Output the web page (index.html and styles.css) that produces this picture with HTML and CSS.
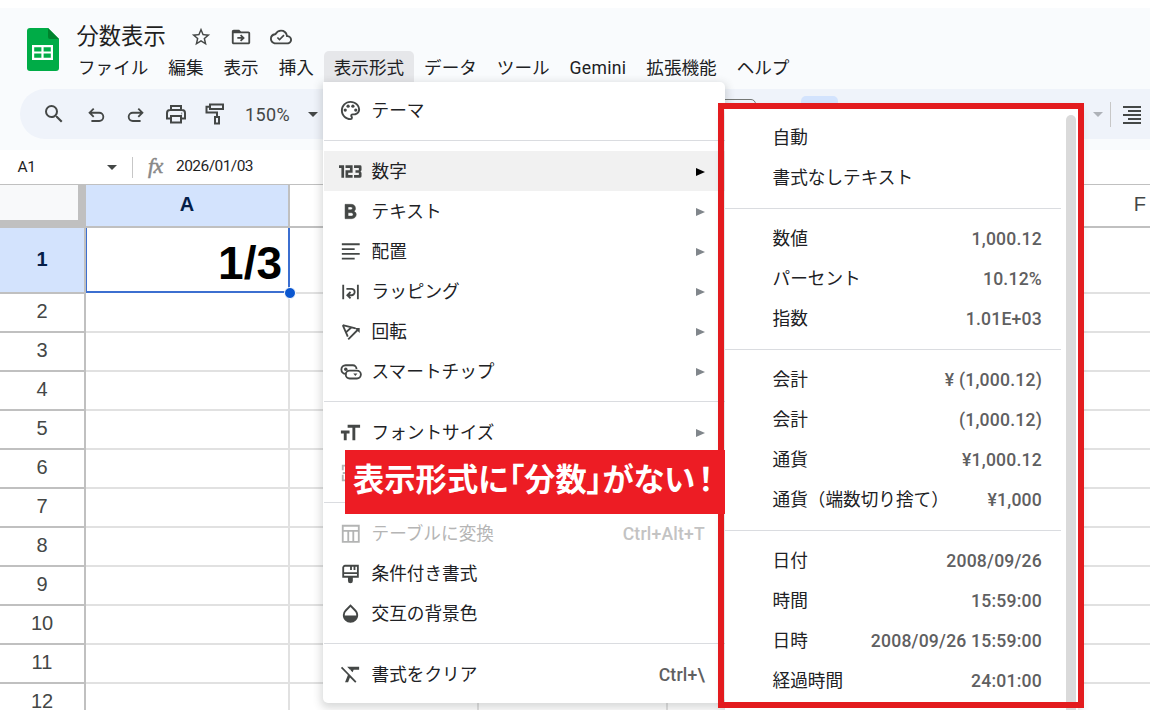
FILE: index.html
```html
<!DOCTYPE html>
<html lang="ja">
<head>
<meta charset="utf-8">
<title>分数表示</title>
<link rel="stylesheet" href="styles.css">
</head>
<body>
<div class="app">
  <header class="header">
    <svg class="logo" viewBox="0 0 32 43"><path d="M3 0H21L32 11V40a3 3 0 0 1-3 3H3a3 3 0 0 1-3-3V3a3 3 0 0 1 3-3Z" fill="#00ac47"/><path d="M21 0L32 11H23a2 2 0 0 1-2-2Z" fill="#00832d"/><path d="M5 17H26V32H5ZM7.2 19.2V23.400H14.400V19.200ZM16.600 19.200V23.400H23.800V19.200ZM7.200 25.600V29.800H14.400V25.600ZM16.600 25.600V29.800H23.800V25.600Z" fill="#fff" fill-rule="evenodd"/></svg>
    <div class="heading">
      <div class="title-row">
        <h1 class="title">分数表示</h1>
        <svg class="ic star" viewBox="0 0 24 24"><path d="M22 9.240l-7.190-.620L12 2 9.190 8.630 2 9.240l5.460 4.730L5.820 21 12 17.270 18.180 21l-1.630-7.030L22 9.240zM12 15.400l-3.760 2.270 1-4.280-3.320-2.880 4.380-.380L12 6.100l1.710 4.040 4.380.380-3.320 2.880 1 4.280L12 15.400z"/></svg>
        <svg class="ic folder" viewBox="0 0 24 24"><path d="M20 6h-8l-2-2H4c-1.100 0-2 .9-2 2v12c0 1.100.9 2 2 2h16c1.100 0 2-.9 2-2V8c0-1.100-.9-2-2-2zm0 12H4V8h16v10z"/><path d="M3 5H10L12 7.500H3Z"/><path d="M12.200 9.200l4 3.800-4 3.800-1.300-1.300 1.500-1.600H8v-1.800h4.400l-1.500-1.600z"/></svg>
        <svg class="ic cloud" viewBox="0 0 24 24"><path d="M19.350 10.040A7.490 7.490 0 0 0 12 4C9.110 4 6.600 5.640 5.350 8.040A5.994 5.994 0 0 0 0 14c0 3.310 2.690 6 6 6h13c2.760 0 5-2.240 5-5 0-2.640-2.050-4.780-4.650-4.960zM19 18H6c-2.210 0-4-1.790-4-4 0-2.050 1.530-3.760 3.560-3.970l1.070-.110.500-.950A5.469 5.469 0 0 1 12 6c2.620 0 4.880 1.860 5.390 4.430l.3 1.500 1.530.110A2.980 2.980 0 0 1 22 15c0 1.650-1.350 3-3 3z"/><path d="M10.400 16.200l-3-3 1.300-1.300 1.700 1.700 4.200-4.200 1.300 1.300z"/></svg>
      </div>
      <nav class="menubar"><span>ファイル</span><span>編集</span><span>表示</span><span>挿入</span><span class="open">表示形式</span><span>データ</span><span>ツール</span><span class="latin">Gemini</span><span>拡張機能</span><span>ヘルプ</span></nav>
    </div>
  </header>

  <div class="toolbar">
    <span class="tool t-search"><svg class="ic" viewBox="0 0 24 24"><path d="M15.500 14h-.790l-.280-.270A6.471 6.471 0 0 0 16 9.500 6.500 6.500 0 1 0 9.500 16c1.610 0 3.090-.590 4.230-1.570l.270.280v.790l5 4.990L20.490 19l-4.990-5zm-6 0a4.500 4.500 0 1 1 0-9 4.500 4.500 0 0 1 0 9z"/></svg></span>
    <span class="tool t-undo"><svg class="ic line" viewBox="0 0 24 24"><path d="M9.500 5L5 9.500L9.500 14M5 9.500H15.500a4 4 0 0 1 0 9H7"/></svg></span>
    <span class="tool t-redo"><svg class="ic line" viewBox="0 0 24 24"><path d="M14.500 5L19 9.500L14.500 14M19 9.500H8.500a4 4 0 0 0 0 9H17"/></svg></span>
    <span class="tool t-print"><svg class="ic line" viewBox="0 0 24 24"><path d="M7 8V4H17V8M7 16.500H3V11a3 3 0 0 1 3-3H18a3 3 0 0 1 3 3V16.500H17M7 14H17V20.500H7Z"/><path d="M17.500 11.500h.6" /></svg></span>
    <span class="tool t-paint"><svg class="ic line" viewBox="0 0 24 24"><path d="M7 2.500H20V7H7ZM7 4.800H3.500V10.500H14V15M12 15H16V21.500H12Z"/></svg></span>
    <span class="zoom-value">150%</span><i class="caret"></i>
    <span class="font-size"></span>
    <span class="bold-active"></span>
    <i class="caret caret-dim"></i>
    <span class="divider"></span>
    <svg class="align-right" viewBox="0 0 18 18"><path d="M0 1H18M5 5H18M0 9H18M5 13H18M0 17H18"/></svg>
    <i class="caret caret-dim caret-edge"></i>
  </div>

  <div class="formula-bar">
    <span class="cell-name">A1</span><i class="caret"></i><span class="divider"></span><em class="fx">fx</em><span class="formula">2026/01/03</span>
  </div>

  <div class="sheet">
    <div class="row head"><div class="corner"></div><div class="cell a">A</div><div class="cell"></div><div class="cell"></div><div class="cell"></div><div class="cell"></div><div class="cell">F</div></div>
    <div class="row first"><div class="num">1</div><div class="cell a">1/3<i class="handle"></i></div><div class="cell"></div><div class="cell"></div><div class="cell"></div><div class="cell"></div><div class="cell"></div></div>
    <div class="row"><div class="num">2</div><div class="cell a"></div><div class="cell"></div><div class="cell"></div><div class="cell"></div><div class="cell"></div><div class="cell"></div></div>
    <div class="row"><div class="num">3</div><div class="cell a"></div><div class="cell"></div><div class="cell"></div><div class="cell"></div><div class="cell"></div><div class="cell"></div></div>
    <div class="row"><div class="num">4</div><div class="cell a"></div><div class="cell"></div><div class="cell"></div><div class="cell"></div><div class="cell"></div><div class="cell"></div></div>
    <div class="row"><div class="num">5</div><div class="cell a"></div><div class="cell"></div><div class="cell"></div><div class="cell"></div><div class="cell"></div><div class="cell"></div></div>
    <div class="row"><div class="num">6</div><div class="cell a"></div><div class="cell"></div><div class="cell"></div><div class="cell"></div><div class="cell"></div><div class="cell"></div></div>
    <div class="row"><div class="num">7</div><div class="cell a"></div><div class="cell"></div><div class="cell"></div><div class="cell"></div><div class="cell"></div><div class="cell"></div></div>
    <div class="row"><div class="num">8</div><div class="cell a"></div><div class="cell"></div><div class="cell"></div><div class="cell"></div><div class="cell"></div><div class="cell"></div></div>
    <div class="row"><div class="num">9</div><div class="cell a"></div><div class="cell"></div><div class="cell"></div><div class="cell"></div><div class="cell"></div><div class="cell"></div></div>
    <div class="row"><div class="num">10</div><div class="cell a"></div><div class="cell"></div><div class="cell"></div><div class="cell"></div><div class="cell"></div><div class="cell"></div></div>
    <div class="row"><div class="num">11</div><div class="cell a"></div><div class="cell"></div><div class="cell"></div><div class="cell"></div><div class="cell"></div><div class="cell"></div></div>
    <div class="row"><div class="num">12</div><div class="cell a"></div><div class="cell"></div><div class="cell"></div><div class="cell"></div><div class="cell"></div><div class="cell"></div></div>
  </div>

  <div class="menu">
    <div class="item"><svg class="ic" viewBox="0 0 24 24"><path d="M12 22C6.490 22 2 17.510 2 12S6.490 2 12 2s10 4.040 10 9c0 3.310-2.690 6-6 6h-1.770c-.280 0-.5.220-.5.500 0 .120.050.230.130.330.410.470.640 1.060.640 1.670A2.500 2.500 0 0 1 12 22zm0-18c-4.410 0-8 3.590-8 8s3.590 8 8 8c.280 0 .5-.220.5-.5a.54.54 0 0 0-.140-.350c-.410-.460-.630-1.050-.630-1.650a2.500 2.500 0 0 1 2.500-2.500H16c2.210 0 4-1.790 4-4 0-3.860-3.590-7-8-7z"/><circle cx="6.500" cy="11.500" r="1.700"/><circle cx="9.500" cy="7.500" r="1.700"/><circle cx="14.500" cy="7.500" r="1.700"/><circle cx="17.500" cy="11.500" r="1.700"/></svg><span>テーマ</span></div>
    <hr>
    <div class="item hover"><svg class="ic" viewBox="0 0 24 24"><path d="M0 5.500H5.300V18.500H2.500V8.300H0ZM6.800 5.500H14.200V13.200H9.600V15.700H14.200V18.500H6.800V10.700H11.400V8.300H6.800ZM15.700 5.500H22a1.500 1.500 0 0 1 1.500 1.500V10.800L22.500 12l1 1.200V17a1.500 1.500 0 0 1-1.500 1.500H15.700V15.700H20.700V13.300H17.200V10.700H20.700V8.300H15.700Z"/></svg><span>数字</span><b class="arrow"></b></div>
    <div class="item"><svg class="ic" viewBox="0 0 24 24"><path d="M15.600 11.790c.970-.670 1.650-1.770 1.650-2.790 0-2.760-1.750-4.500-4.500-4.500H6.300v15h7.040c2.500 0 4.660-1.900 4.660-4.250 0-1.520-.860-2.820-2.400-3.460zM9.500 7.200h3a1.500 1.500 0 0 1 0 3h-3v-3zm3.500 9.600H9.500v-3.500H13a1.750 1.750 0 0 1 0 3.500z" stroke="#444746" stroke-width=".5"/></svg><span>テキスト</span><b class="arrow"></b></div>
    <div class="item"><svg class="ic line" viewBox="0 0 24 24"><path d="M2 3.500H21.500M2 8.800H16M2 14H21.500M2 19.300H16"/></svg><span>配置</span><b class="arrow"></b></div>
    <div class="item"><svg class="ic line" viewBox="0 0 24 24"><path d="M3.500 4V20M19.500 4V20M7 8.500H12.500a3.500 3.500 0 0 1 0 7H8.500M11.500 12L8 15.500L11.500 19"/></svg><span>ラッピング</span><b class="arrow"></b></div>
    <div class="item"><svg class="ic line" viewBox="0 0 24 24"><path d="M3 4.500L17 8M3 4.500L8.500 17M12.500 6.800L6.500 12.500M9 20L20 9"/><path d="M21.500 7.500V13L16 7.500Z" fill="#444746" stroke="none"/></svg><span>回転</span><b class="arrow"></b></div>
    <div class="item"><svg class="ic line chip" viewBox="0 0 24 24"><path d="M7.500 14H6.200a4.700 4.700 0 0 1 0-9.400H14a4 4 0 0 1 4 4M10.500 10.500H18.500a4.300 4.300 0 0 1 0 8.600H10.500a4.300 4.300 0 0 1 0-8.600Z"/><circle cx="6.300" cy="9" r="1.900" fill="#444746" stroke="none"/><path d="M14.500 13.500h4.500l-2.250 2.800z" fill="#444746" stroke="none"/></svg><span>スマートチップ</span><b class="arrow"></b></div>
    <hr>
    <div class="item"><svg class="ic" viewBox="0 0 24 24"><path d="M9 4V7H14V20H17V7H22V4ZM2 10V13H5V20H8V13H11V10Z"/></svg><span>フォントサイズ</span><b class="arrow"></b></div>
    <div class="item disabled"><svg class="ic line" viewBox="0 0 24 24"><path d="M3 9V4H8M12 4H21V9M3 14V20H8M21 14V20H12M3 12H8"/></svg></div>
    <hr>
    <div class="item disabled"><svg class="ic line" viewBox="0 0 24 24"><path d="M3 3H20.500V20.500H3ZM3 8.500H20.500M9 8.500V20.500M14.500 8.500V20.500"/></svg><span>テーブルに変換</span><kbd>Ctrl+Alt+T</kbd></div>
    <div class="item"><svg class="ic line" viewBox="0 0 24 24"><path d="M5.500 3H19.500V15H3.500V5a2 2 0 0 1 2-2ZM3.500 11H19.500M12 3V7.500M15.800 3V7.500"/><path d="M8.700 15H14V19.500a2.600 2.600 0 0 1-5.300 0Z" fill="#444746" stroke="none"/></svg><span>条件付き書式</span></div>
    <div class="item"><svg class="ic" viewBox="0 0 24 24"><path d="M17.660 8L12 2.350 6.340 8A8.020 8.020 0 0 0 4 13.640c0 2 .780 4.110 2.340 5.670a7.990 7.990 0 0 0 11.320 0c1.560-1.560 2.340-3.670 2.340-5.670S19.220 9.560 17.660 8zM6 14c.010-2 .620-3.270 1.760-4.400L12 5.270l4.240 4.380C17.380 10.770 17.990 12 18 14H6z"/></svg><span>交互の背景色</span></div>
    <hr>
    <div class="item"><svg class="ic" viewBox="0 0 24 24"><path d="M3.300 4L2 5.300l7.300 7.300L6.300 20h3.200l1.900-5 5.500 5.500 1.300-1.300ZM8.500 4l3 3h1l-.3.700 2 2L15.300 7H21V4Z"/></svg><span>書式をクリア</span><kbd class="dark">Ctrl+\</kbd></div>
  </div>

  <div class="submenu">
    <div class="format"><span>自動</span></div>
    <div class="format"><span>書式なしテキスト</span></div>
    <hr>
    <div class="format"><span>数値</span><b>1,000.12</b></div>
    <div class="format"><span>パーセント</span><b>10.12%</b></div>
    <div class="format"><span>指数</span><b>1.01E+03</b></div>
    <hr>
    <div class="format"><span>会計</span><b>¥ (1,000.12)</b></div>
    <div class="format"><span>会計</span><b>(1,000.12)</b></div>
    <div class="format"><span>通貨</span><b>¥1,000.12</b></div>
    <div class="format"><span>通貨（端数切り捨て）</span><b>¥1,000</b></div>
    <hr>
    <div class="format"><span>日付</span><b>2008/09/26</b></div>
    <div class="format"><span>時間</span><b>15:59:00</b></div>
    <div class="format"><span>日時</span><b>2008/09/26 15:59:00</b></div>
    <div class="format"><span>経過時間</span><b>24:01:00</b></div>
    <i class="scrollbar"></i>
  </div>
  <div class="frame"></div>
  <div class="callout"><span class="body">表示形式に「分数」がない</span>！</div>
</div>
</body>
</html>
```
FILE: styles.css
```css
* { box-sizing: border-box; }
body { margin: 0; background: #fff; font-family: Roboto, "Noto Sans CJK JP", sans-serif; color: #202124; }
.app { position: relative; width: 1150px; height: 710px; overflow: hidden; padding-top: 8px; }
.ic { width: 24px; height: 24px; fill: #444746; flex: none; }
.ic.line { fill: none; stroke: #444746; stroke-width: 2; }
.caret { flex: none; width: 0; height: 0; border: 5px solid transparent; border-top-color: #444746; border-bottom: 0; }
.caret-dim { border-top-color: #aeb2b8; }

.header { display: flex; height: 81px; background: #f9fbfd; padding-left: 26.500px; }
.logo { width: 32px; height: 43px; margin-top: 20px; }
.heading { margin-left: 9.500px; }
.title-row { display: flex; align-items: center; height: 43px; padding: 14px 0 0 8.500px; }
.title { margin: -5px 24.500px 0 0; font: 400 22.3px/30px "Noto Sans CJK JP", sans-serif; color: #1f1f1f; }
.title-row .ic { width: 22px; height: 22px; }
.title-row .folder { margin-left: 18px; }
.title-row .cloud { margin-left: 18px; }
.menubar { display: flex; height: 31px; font: 400 17.580px/31px "Noto Sans CJK JP", sans-serif; }
.menubar span { padding: 0 10px; white-space: nowrap; height: 31px; }
.menubar .open { background: #e6e7ea; border-radius: 5px 5px 0 0; }
.menubar .latin { font-family: Roboto, sans-serif; line-height: 34px; letter-spacing: .3px; }

.toolbar { display: flex; align-items: center; height: 61px; padding: 0 0 11px 14px; border-left: 20px solid #f9fbfd; background: #f9fbfd; position: relative; isolation: isolate; }
.toolbar::before { content: ""; position: absolute; inset: 0 0 11px 0; z-index: -1; border-radius: 25px 0 0 25px; background: #eff3fa; }
.tool { display: flex; justify-content: center; flex: none; }
.t-search { width: 40px; }
.t-undo { width: 44px; }
.t-redo { width: 35px; }
.t-print { width: 46px; }
.t-paint { width: 31px; }
.t-undo, .t-redo { padding-top: 2px; }
.t-undo .ic, .t-redo .ic { width: 22px; }
.zoom-value { width: 46px; margin: 0 17px 0 15px; padding-top: 1px; font-size: 18px; letter-spacing: .4px; color: #444746; }
.toolbar .zoom-value + .caret { margin-left: 1px; }
.divider { flex: none; width: 1px; height: 25px; background: #c7c7c7; }
.font-size { flex: none; width: 56px; height: 31px; margin-left: 382px; border: 1px solid #747775; border-radius: 5px; }
.bold-active { flex: none; width: 37px; height: 37px; margin: 0 255px 0 45px; border-radius: 5px; background: #d3e3fd; }
.toolbar .divider { margin: 0 12px 0 7px; }
.align-right { flex: none; width: 18px; height: 18px; margin-top: 1px; stroke: #444746; stroke-width: 1.900; }
.caret-edge { margin-left: 9px; }

.formula-bar { display: flex; align-items: center; height: 34px; color: #1f1f1f; font-size: 15.500px; }
.cell-name { width: 89px; padding-left: 17.500px; letter-spacing: -.3px; }
.formula-bar .caret { margin: 0 15px 0 18px; }
.formula-bar .divider { height: 21px; margin-top: 1px; }
.fx { width: 28px; margin: 0 0 2px 15px; font: italic 400 22px/24px "Liberation Serif", serif; letter-spacing: -.5px; color: #888; -webkit-text-stroke: .5px #888; }
.formula { margin-top: -2px; letter-spacing: -.55px; }

.sheet { border-top: 1px solid #c0c0c0; }
.row { display: flex; height: 39px; }
.corner, .num { flex: none; width: 86px; border-right: 2px solid #c0c0c0; border-bottom: 2px solid #c0c0c0; }
.num { display: flex; justify-content: center; align-items: center; font: 20px "Liberation Sans", Arial, sans-serif; color: #444746; padding-bottom: 2px; }
.cell { flex: none; width: 189.100px; border-right: 2px solid #e1e1e1; border-bottom: 2px solid #e1e1e1; }
.cell.a { width: 204px; }
.head { height: 43px; }
.head .cell { display: flex; justify-content: center; align-items: center; border-color: #c0c0c0; font: 20px "Liberation Sans", Arial, sans-serif; color: #444746; padding-bottom: 3px; }
.head .cell.a { background: #d3e3fd; color: #041e49; font-weight: 700; }
.corner { border-right: 8px solid #c0c0c0; border-bottom: 8px solid #c0c0c0; background: #f8f9fa; }
.first { height: 66px; }
.first .num { background: #d3e3fd; color: #041e49; font-weight: 700; }
.first .cell.a { position: relative; border-color: #3c6fd0; border-left: 1px solid #3c6fd0; height: 65px; padding: 8px 6px 0 0; text-align: right; font: 700 46px/54px "Liberation Sans", Arial, sans-serif; color: #000; }
.handle { position: absolute; right: -8px; bottom: -8px; width: 12px; height: 12px; border: 1px solid #fff; border-radius: 50%; background: #0b57d0; }

.menu { position: absolute; left: 323px; top: 82px; width: 402px; height: 621px; padding: 8px 0 0 1px; background: #fff; border-radius: 0 5px 5px 5px; box-shadow: 0 3px 9px 2px rgba(60, 64, 67, .2); font: 400 17.650px/40px "Noto Sans CJK JP", sans-serif; }
.item { display: flex; align-items: center; height: 40px; padding: 0 20px 0 15px; }
.item.hover { background: #f1f1f1; }
.item span { margin-left: 9.500px; }
.item .ic { width: 23px; height: 23px; }
.item .line { width: 22px; height: 22px; margin: 1px .5px 0 .5px; }
.item .chip { width: 24px; margin: 1px -.5px 0 -.5px; }
hr { height: 1px; margin: 10px 0; border: 0; background: #dadce0; }
.arrow { margin: 1px 0 0 auto; width: 0; height: 0; border: 4.500px solid transparent; border-left: 9px solid #80868b; border-right: 0; }
.hover .arrow { border-left-color: #000; }
.disabled { color: #b5b5b5; }
.disabled .ic { opacity: .4; }
kbd { margin-left: auto; font: 500 17.600px/42px Roboto, sans-serif; color: #c3c3c3; letter-spacing: .2px; padding-top: 1px; }
kbd.dark { color: #5f6061; }

.submenu { position: absolute; left: 725px; top: 108px; width: 353px; height: 610px; padding: 10px 17px 0 0; background: #fff; box-shadow: 0 3px 9px 2px rgba(60, 64, 67, .2); font: 400 17.650px/38px "Noto Sans CJK JP", sans-serif; }
.format { display: flex; justify-content: space-between; height: 40px; padding: 0 19px 0 47.500px; white-space: nowrap; }
.format b { font: 500 17.600px/41px Roboto, sans-serif; color: #5f6061; letter-spacing: .2px; }
.scrollbar { position: absolute; right: 2px; top: 7px; width: 10px; height: 620px; border-radius: 5px; background: #dadada; }
.frame { position: absolute; left: 717.500px; top: 102.500px; width: 366px; height: 605px; border: 6px solid #e31b1e; }
.callout { position: absolute; left: 345px; top: 450px; width: 380px; height: 64px; padding-left: 8px; background: #ed1c24; color: #fff; font: 700 31.300px/56px "Noto Sans CJK JP", sans-serif; font-feature-settings: "palt"; white-space: nowrap; }
.callout .body { margin-right: 3px; }
```
